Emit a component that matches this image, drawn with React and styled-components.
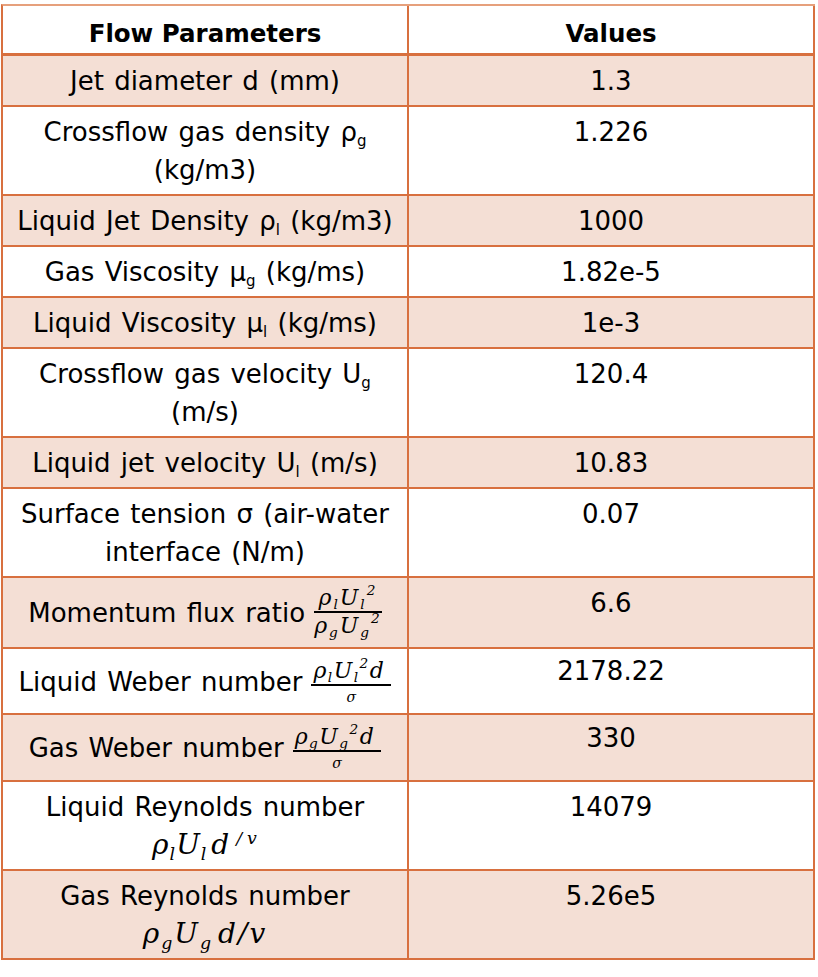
import React from 'react';
import styled, { createGlobalStyle } from 'styled-components';

const ORANGE = '#D8703F';
const ORANGE_LIGHT = '#E6A07C';
const BEIGE = '#F4DFD5';

const GlobalStyle = createGlobalStyle`
  *, *::before, *::after { box-sizing: border-box; }
  html, body { margin: 0; padding: 0; background: #ffffff; }
  body { font-family: "DejaVu Sans", Lato, sans-serif; color: #000; }
`;

const Page = styled.div`
  padding: 4px 0 0 1px;
`;

const Grid = styled.div`
  display: grid;
  grid-template-columns: 406px 406px;
  width: 814px;
  border-left: 2px solid ${ORANGE};
  border-top: 2px solid ${ORANGE_LIGHT};
  font-family: "DejaVu Sans", Lato, sans-serif;
  font-size: 26px;
  line-height: 38px;
  color: #000;
`;

const Cell = styled.div`
  display: flex;
  flex-direction: column;
  justify-content: ${(p) => (p.$top ? 'flex-start' : 'center')};
  text-align: center;
  white-space: nowrap;
  border-right: 2px solid ${ORANGE};
  border-bottom: ${(p) => (p.$head ? 3 : 2)}px solid ${ORANGE};
  background: ${(p) => (p.$shade ? BEIGE : '#ffffff')};
  padding: ${(p) => (p.$head ? '9px 6px 0' : `${6 + (p.$shift || 0)}px 6px 5px`)};
`;

const HeadText = styled.div`
  font-size: 24.5px;
  font-weight: bold;
`;

const Text = styled.div`
  word-spacing: 2px;
`;

const FracLine = styled.div`
  display: flex;
  align-items: center;
  justify-content: center;
  gap: 9px;
  word-spacing: 2px;
`;

const Sub = styled.sub`
  font-size: 15px;
  line-height: 0;
  vertical-align: -5px;
`;

const MathText = styled.span`
  font-family: "DejaVu Serif", "Liberation Serif", serif;
  font-style: italic;
  font-size: ${(p) => p.$size}px;
  letter-spacing: ${(p) => p.$ls || 0}px;
  word-spacing: 0;
`;

const MSub = styled.span`
  font-size: 0.62em;
  line-height: 0;
  vertical-align: -0.32em;
`;

const MSup = styled.span`
  font-size: 0.62em;
  line-height: 0;
  vertical-align: ${(p) => p.$raise || 0.75}em;
`;

const Gap = styled.span`
  display: inline-block;
  width: ${(p) => p.$w}px;
`;

const Frac = styled.span`
  display: inline-flex;
  flex-direction: column;
  align-items: stretch;
`;

const Num = styled.span`
  display: flex;
  align-items: flex-end;
  justify-content: center;
  height: ${(p) => p.$h}px;
  line-height: 1.15;
  padding: 0 ${(p) => p.$pr}px 1px 2px;
  border-bottom: 2px solid #000;
`;

const Den = styled.span`
  display: flex;
  align-items: ${(p) => (p.$center ? 'center' : 'flex-start')};
  justify-content: center;
  height: ${(p) => p.$h}px;
  line-height: 1.15;
`;

const rows = [
  { label: <>Jet diameter d (mm)</>, value: '1.3' },
  {
    label: (
      <>
        Crossflow gas density ρ<Sub>g</Sub>
        <br />
        (kg/m3)
      </>
    ),
    value: '1.226',
  },
  {
    label: (
      <>
        Liquid Jet Density ρ<Sub>l</Sub> (kg/m3)
      </>
    ),
    value: '1000',
  },
  {
    label: (
      <>
        Gas Viscosity μ<Sub>g</Sub> (kg/ms)
      </>
    ),
    value: '1.82e-5',
  },
  {
    label: (
      <>
        Liquid Viscosity μ<Sub>l</Sub> (kg/ms)
      </>
    ),
    value: '1e-3',
  },
  {
    label: (
      <>
        Crossflow gas velocity U<Sub>g</Sub>
        <br />
        (m/s)
      </>
    ),
    value: '120.4',
  },
  {
    label: (
      <>
        Liquid jet velocity U<Sub>l</Sub> (m/s)
      </>
    ),
    value: '10.83',
  },
  {
    label: (
      <>
        Surface tension σ (air-water
        <br />
        interface (N/m)
      </>
    ),
    value: '0.07',
  },
  {
    frac: true,
    label: (
      <FracLine>
        Momentum flux ratio
        <Frac>
          <Num $h={29} $pr={2}>
            <MathText $size={22} $ls={2}>
              ρ<MSub>l</MSub>U<MSub>l</MSub>
              <MSup>2</MSup>
            </MathText>
          </Num>
          <Den $h={29}>
            <MathText $size={22} $ls={2}>
              ρ<MSub>g</MSub>U<MSub>g</MSub>
              <MSup>2</MSup>
            </MathText>
          </Den>
        </Frac>
      </FracLine>
    ),
    value: '6.6',
  },
  {
    frac: true,
    label: (
      <FracLine>
        Liquid Weber number
        <Frac>
          <Num $h={31} $pr={6}>
            <MathText $size={22} $ls={1.5}>
              ρ<MSub>l</MSub>U<MSub>l</MSub>
              <MSup>2</MSup>d
            </MathText>
          </Num>
          <Den $h={22} $center>
            <MathText $size={14}>σ</MathText>
          </Den>
        </Frac>
      </FracLine>
    ),
    value: '2178.22',
    shift: -3,
  },
  {
    frac: true,
    label: (
      <FracLine>
        Gas Weber number
        <Frac>
          <Num $h={31} $pr={6}>
            <MathText $size={22} $ls={1.5}>
              ρ<MSub>g</MSub>U<MSub>g</MSub>
              <MSup>2</MSup>d
            </MathText>
          </Num>
          <Den $h={23} $center>
            <MathText $size={14}>σ</MathText>
          </Den>
        </Frac>
      </FracLine>
    ),
    value: '330',
    shift: -2,
  },
  {
    label: (
      <>
        Liquid Reynolds number
        <br />
        <MathText $size={28} $ls={1}>
          ρ<MSub>l</MSub>U<MSub>l</MSub>
          <Gap $w={4} />d<Gap $w={6} />
          <MSup $raise={0.6}>/</MSup>
          <Gap $w={4} />
          <MSup $raise={0.6}>v</MSup>
        </MathText>
      </>
    ),
    value: '14079',
  },
  {
    label: (
      <>
        Gas Reynolds number
        <br />
        <MathText $size={28} $ls={2}>
          ρ<MSub>g</MSub>U<MSub>g</MSub>
          <Gap $w={5} />d/v
        </MathText>
      </>
    ),
    value: '5.26e5',
  },
];

export default function App() {
  return (
    <>
      <GlobalStyle />
      <Page>
        <Grid>
          <Cell $head>
            <HeadText>Flow Parameters</HeadText>
          </Cell>
          <Cell $head>
            <HeadText>Values</HeadText>
          </Cell>
          {rows.map((r, i) => (
            <React.Fragment key={i}>
              <Cell $shade={i % 2 === 0}>
                {r.frac ? r.label : <Text>{r.label}</Text>}
              </Cell>
              <Cell $shade={i % 2 === 0} $top $shift={r.shift}>
                <Text>{r.value}</Text>
              </Cell>
            </React.Fragment>
          ))}
        </Grid>
      </Page>
    </>
  );
}
